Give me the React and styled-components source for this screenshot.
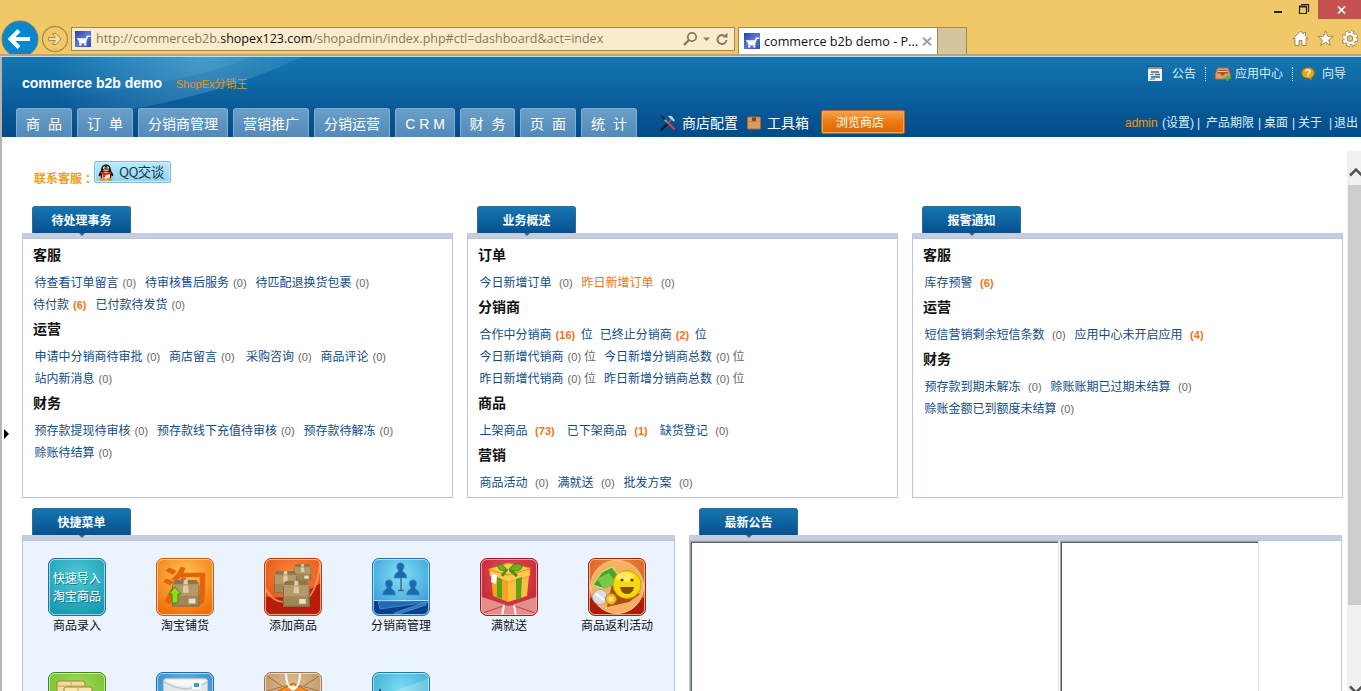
import React from "react";
import styled, { createGlobalStyle, css } from "styled-components";

const GlobalStyle = createGlobalStyle`
  * { box-sizing: border-box; }
  body {
    margin: 0;
    overflow: hidden;
    background: #fff;
    font: 12px/22px "Liberation Sans", "Noto Sans CJK SC", sans-serif;
  }
`;

const Page = styled.div`
  width: 1361px;
  height: 691px;
  display: flex;
  flex-direction: column;
  overflow: hidden;
`;

/* ---------- browser chrome ---------- */

const Chrome = styled.div`
  flex: none;
  height: 57px;
  background: #f0c868;
  border-bottom: 1px solid #c3dfe9;
  box-shadow: inset 0 -2px 0 #b3a584;
`;

const TitleBar = styled.div`
  height: 19px;
  display: flex;
  justify-content: flex-end;
`;

const CloseButton = styled.div`
  width: 43px;
  height: 19px;
  background: #c75050;
  display: flex;
  align-items: center;
  justify-content: center;
  padding-left: 3px;
`;

const WindowGlyph = styled.svg`
  display: block;
`;

const ToolBar = styled.div`
  height: 35px;
  display: flex;
  overflow: hidden;
`;

const NavGlyph = styled.svg`
  flex: none;
  display: block;
`;

const AddressBar = styled.div`
  width: 664px;
  height: 24px;
  margin: 8px 3px 0 2px;
  padding: 0 5px 0 3px;
  border: 1px solid #a08a4c;
  background: #faebcc;
  display: flex;
  align-items: center;
  color: #85795c;
  font-family: "Open Sans", "Noto Sans", sans-serif;
  font-size: 12.5px;
`;

const Url = styled.span`
  flex: 1;
  padding-left: 5px;
  white-space: nowrap;
  b { font-weight: 400; color: #111; }
`;

const BrowserTab = styled.div`
  width: 200px;
  height: 27px;
  margin-top: 8px;
  padding: 0 5px 0 5px;
  border: 1px solid #a08a4c;
  border-bottom: 0;
  background: #fff;
  display: flex;
  align-items: center;
  font-family: "Open Sans", "Noto Sans", sans-serif;
  font-size: 12.65px;
  color: #111;
  white-space: nowrap;
  span { flex: 1; padding-left: 4px; }
`;

const NewTab = styled.div`
  width: 29px;
  height: 27px;
  margin-top: 8px;
  border: 1px solid #a08a4c;
  border-width: 1px 1px 0 0;
  background: #d6c59c;
`;

const BrowserIcons = styled.div`
  margin-left: auto;
  padding-top: 11px;
  display: flex;
  gap: 8px;
`;

/* ---------- application header ---------- */

const Body = styled.div`
  flex: 1;
  min-height: 0;
  border-left: 2px solid #b4b4b4;
  display: flex;
  flex-direction: column;
`;

const Header = styled.header`
  position: relative;
  flex: none;
  height: 80px;
  background: linear-gradient(#1577b0, #0c62a0 45%, #024a88);
  display: flex;
  flex-direction: column;
  justify-content: space-between;
`;

const Glow = styled.svg`
  position: absolute;
  left: 0;
  top: 0;
`;

const HeaderTop = styled.div`
  position: relative;
  display: flex;
  align-items: flex-start;
  padding-left: 20px;
  color: #fff;
  white-space: nowrap;
`;

const SiteName = styled.span`
  width: 154px;
  padding-top: 15px;
  font-size: 14px;
  font-weight: 700;
`;

const Product = styled.span`
  padding-top: 16px;
  font-size: 11px;
  color: #e3951c;
`;

const TopLinks = styled.div`
  margin-left: auto;
  padding: 6px 15px 0 0;
  display: flex;
  align-items: center;
  color: #d8f0ff;
`;

const TopLink = styled.span`
  display: flex;
  align-items: center;
  gap: ${(p) => p.$gap}px;
  height: 22px;
`;

const Dots = styled.i`
  height: 14px;
  margin: 0 ${(p) => p.$after}px 0 9px;
  border-left: 1px dotted #cfe6f4;
`;

const NavRow = styled.nav`
  position: relative;
  display: flex;
  padding-left: 14px;
  color: #fff;
  white-space: nowrap;
`;

const NavTab = styled.span`
  width: ${(p) => p.$w}px;
  height: 29px;
  margin-right: 5px;
  padding-top: 1px;
  border: 1px solid #81add1;
  border-bottom: 0;
  border-radius: 3px 3px 0 0;
  background: linear-gradient(#6a9fc8, #5289b8);
  font-size: 14px;
  line-height: 28px;
  text-align: center;
  word-spacing: ${(p) => (p.$wide ? 4 : 0)}px;
`;

const Tool = styled.span`
  display: flex;
  align-items: center;
  gap: 6px;
  margin: 1px 9px 0 0;
  font-size: 14px;
`;

const Tools = styled.div`
  display: flex;
  padding-left: 18px;
`;

const ShopButton = styled.span`
  width: 84px;
  height: 24px;
  margin: 2px 0 0 3px;
  padding-left: 14px;
  border: 1px solid #b9632a;
  border-radius: 2px;
  background: linear-gradient(#f6a54c, #ee7d12 45%, #dd6500);
  box-shadow: inset 0 0 0 1px #f3a45a;
  line-height: 25px;
`;

const Account = styled.div`
  display: flex;
  margin-left: auto;
  padding: 3px 3px 0 0;
  line-height: 24px;
  color: #d8f0ff;
`;

const AccountPart = styled.span`
  width: ${(p) => p.$w}px;
  color: ${(p) => (p.$user ? "#eb9a12" : "inherit")};
`;

/* ---------- content ---------- */

const Content = styled.div`
  flex: 1;
  min-height: 0;
  display: flex;
`;

const Gutter = styled.div`
  width: 20px;
  flex: none;
  padding: 292px 0 0 2px;
  svg { display: block; }
`;

const Main = styled.main`
  width: 1325px;
  flex: none;
  overflow: hidden;
`;

const Contact = styled.div`
  display: flex;
  height: 69px;
  padding: 24px 0 0 12px;
`;

const ContactLabel = styled.span`
  width: 60px;
  padding-top: 7px;
  font-weight: 700;
  color: #f79c10;
  white-space: nowrap;
  i { font-style: normal; padding-left: 3px; }
`;

const QQButton = styled.span`
  width: 77px;
  height: 22px;
  display: flex;
  align-items: center;
  gap: 5px;
  padding-left: 3px;
  border: 1px solid #7dbcdc;
  border-radius: 2px;
  background: linear-gradient(#bfe9fb, #a8def8 50%, #8fd0f4);
  box-shadow: inset 0 0 0 1px #c9edfc;
  color: #12394f;
  font: 13.5px/20px "Noto Sans CJK SC", sans-serif;
  letter-spacing: -0.6px;
  white-space: nowrap;
  span { margin-top: -2px; }
`;

const Columns = styled.div`
  display: flex;
  gap: 14px;
  margin-bottom: 10px;
`;

const PanelBox = styled.section`
  width: ${(p) => p.$w}px;
  flex: none;
`;

const PanelTab = styled.h2`
  position: relative;
  width: 99px;
  height: 27px;
  margin: 0 0 0 10px;
  border: 1px solid #2c6a98;
  border-bottom: 0;
  border-radius: 3px 3px 0 0;
  background: linear-gradient(#1577b2, #07508e);
  color: #fff;
  font-size: 12px;
  line-height: 28px;
  text-align: center;
  &::after {
    content: "";
    position: absolute;
    left: 46px;
    top: 26px;
    border: 3px solid transparent;
    border-top: 3px solid #3a6283;
    border-bottom: 0;
  }
`;

const PanelBody = styled.div`
  height: ${(p) => p.$h}px;
  border: 1px solid #b9c4d8;
  border-top: 5px solid #c5cee1;
  box-shadow: inset 0 1px 0 #b9c4d8;
  background: ${(p) => (p.$tinted ? "#ebf3ff" : "#fff")};
`;

const Lists = styled.div`
  padding: 4px 0 0 10px;
`;

const GroupTitle = styled.h3`
  height: 30px;
  margin: 0;
  font-size: 14px;
  line-height: 26px;
  color: #111;
`;

const Line = styled.div`
  display: flex;
  height: 22px;
  padding-left: ${(p) => p.$indent}px;
  white-space: nowrap;
`;

const Label = styled.a`
  color: ${(p) => (p.$hot ? "#f47216" : "#0f4c86")};
`;

const Count = styled.span`
  margin: 0 ${(p) => p.$after}px 0 ${(p) => p.$before}px;
  font-size: 11px;
  line-height: 23px;
  color: #666;
  ${(p) => p.$hot && css`font-weight: 700; color: #f47216;`}
`;

const Unit = styled.span`
  margin-right: ${(p) => p.$after}px;
  color: ${(p) => (p.$linked ? "#0f4c86" : "#666")};
`;

const Shortcuts = styled.div`
  display: grid;
  grid-template-columns: repeat(6, 108px);
  grid-auto-rows: 114px;
  padding-top: 18px;
`;

const Shortcut = styled.div`
  display: flex;
  flex-direction: column;
  align-items: center;
  color: #111;
  line-height: 20px;
  white-space: nowrap;
  svg { display: block; }
`;

const Frames = styled.div`
  display: flex;
  padding-top: 1px;
  gap: 1px;
`;

const Frame = styled.div`
  width: ${(p) => p.$w}px;
  height: 160px;
  border: 1px solid #a0a0a0;
  border-right-color: #e3e3e3;
  box-shadow: inset 1px 1px 0 #606060;
`;

const ScrollBar = styled.div`
  width: 14px;
  height: 540px;
  flex: none;
  margin-top: 14px;
  padding-left: 1px;
  background: #f0f0f0;
  display: flex;
  flex-direction: column;
`;

const ScrollThumb = styled.div`
  height: 420px;
  background: #cdcdcd;
`;

const ScrollArrow = styled.svg`
  display: block;
  height: ${(p) => p.$h}px;
  width: 13px;
`;

/* ---------- drawings ---------- */

const CartIcon = () => (
  <NavGlyph width="16" height="16" viewBox="0 0 16 16">
    <defs>
      <linearGradient id="cart" x1="0" y1="0" x2="1" y2="1">
        <stop offset="0" stopColor="#2a3fa8" />
        <stop offset=".5" stopColor="#5b7ad8" />
        <stop offset="1" stopColor="#2a48b4" />
      </linearGradient>
    </defs>
    <rect width="16" height="16" fill="url(#cart)" />
    <path d="M1.5 7.2h9.200L12 4.600h3.400v1.300h-2.300l-1.400 3.300-.5 3.300H4.400L3.600 9.500z" fill="#fff" />
    <circle cx="5.3" cy="13.600" r="1.200" fill="#fff" />
    <circle cx="10.3" cy="13.600" r="1.200" fill="#fff" />
  </NavGlyph>
);

const Penguin = () => (
  <svg width="16" height="17" viewBox="0 0 16 17">
    <path d="M3 6.5C3 2.5 5 .5 8 .5s5 2 5 6c1.5 2 2.6 4 2.2 5.6-.8.6-1.6-.8-1.6-.8L13 14H3l-.6-2.7s-.8 1.4-1.6.8C.4 10.5 1.5 8.5 3 6.5z" fill="#171717" />
    <ellipse cx="8" cy="12" rx="4" ry="4" fill="#fff" />
    <path d="M3 7.6q5 2.4 10 0l.4 2q-3 1.5-6 1.4l-.2 2.400H4.600l.1-2.800-2.100-1z" fill="#e2231a" />
    <ellipse cx="6.3" cy="3.900" rx="1.200" ry="1.600" fill="#fff" />
    <ellipse cx="9.700" cy="3.900" rx="1.200" ry="1.600" fill="#fff" />
    <circle cx="6.600" cy="4.100" r=".6" /><circle cx="9.400" cy="4.100" r=".6" />
    <ellipse cx="8" cy="6.500" rx="3" ry=".9" fill="#f5a51c" />
    <ellipse cx="4.600" cy="15.200" rx="3.200" ry="1.500" fill="#f08a1a" />
    <ellipse cx="11.400" cy="15.200" rx="3.200" ry="1.500" fill="#f08a1a" />
  </svg>
);

const NoteIcon = () => (
  <svg width="16" height="16" viewBox="0 0 16 16">
    <rect x="1" y="1" width="14" height="14" fill="#f3f3f3" />
    <path d="M.5 1.500h15" stroke="#2d3740" strokeWidth="3" strokeDasharray="1 1" />
    <path d="M4 6h8" stroke="#444" strokeWidth="1.300" />
    <path d="M3 8.500h4M3 13h5" stroke="#58a4c8" strokeWidth="1.300" />
    <path d="M8 8.500h5M4 11h9" stroke="#2c6c9a" strokeWidth="1.300" />
  </svg>
);

const TrayIcon = () => (
  <svg width="16" height="15" viewBox="0 0 16 15">
    <path d="M2.500 1h10.500l2 6v5H.500V7z" fill="#e89a60" stroke="#b8703c" />
    <path d="M3.500 3h8.500l1.200 3.500H10l-1 2H6.500l-1-2H2.300z" fill="#9c5a34" />
    <path d="M3 4.500h9.500" stroke="#f3c39a" />
    <path d="M12.500 8v6M9.500 11h6" stroke="#22c832" strokeWidth="1.600" />
  </svg>
);

const HelpIcon = () => (
  <svg width="15" height="15" viewBox="0 0 15 15">
    <path d="M7 .8c3.800 0 6.300 2 6.300 5 0 2.400-1 3.800-2.800 4.600l.2 2.800-3.200-2.200C3.500 11.300.7 9.400.7 6 .7 2.800 3.200.8 7 .8z" fill="#e7a70c" stroke="#a36e05" />
    <path d="M4.800 4.500C5 2.200 9 2.200 9 4.500c0 1.500-2 1.500-2 3.200" fill="none" stroke="#fff" strokeWidth="1.500" />
    <circle cx="7" cy="9.400" r=".9" fill="#fff" />
  </svg>
);

const WrenchIcon = () => (
  <svg width="16" height="16" viewBox="0 0 16 16">
    <path d="M4.500 4.500L8 8" stroke="#b9c2cb" strokeWidth="1.200" />
    <path d="M1 1l3.500 1L5 5 2 4z" fill="#222" />
    <path d="M8 8l6 6" stroke="#d42430" strokeWidth="2.400" strokeLinecap="round" />
    <path d="M8 7.500l6.500 6.500" stroke="#f0a0a4" strokeWidth=".6" />
    <path d="M1.500 14.500L7 9" stroke="#14181f" strokeWidth="2.400" strokeLinecap="round" />
    <path d="M7 9l4-4" stroke="#6a7480" strokeWidth="1.500" />
    <path d="M8 1c3-1 5 .5 5.500 2.500l1.500 2-1.500 1L9.500 3z" fill="#c3ccd5" />
  </svg>
);

const ToolboxIcon = () => (
  <svg width="14" height="14" viewBox="0 0 14 14">
    <rect x=".5" y="1" width="13" height="12" rx="1" fill="#dc9a60" stroke="#a8683c" />
    <path d="M1 5.500h12" stroke="#c88850" />
    <path d="M5 1.500h4v4L7.800 4.700 7 5.600l-.8-.9L5 5.500z" fill="#7c4426" />
  </svg>
);

const Tile = ({ id, from, to, edge, children }) => (
  <svg width="58" height="58" viewBox="0 0 58 58">
    <defs>
      <radialGradient id={id} cx=".5" cy=".3" r=".75">
        <stop offset="0" stopColor={from} />
        <stop offset="1" stopColor={to} />
      </radialGradient>
      <clipPath id={id + "c"}><rect x="1.500" y="1.500" width="55" height="55" rx="5.500" /></clipPath>
    </defs>
    <rect x=".5" y=".5" width="57" height="57" rx="6.500" fill={`url(#${id})`} stroke={edge} />
    <g clipPath={`url(#${id}c)`}>{children}</g>
    <rect x="1.500" y="1.500" width="55" height="55" rx="5.500" fill="none" stroke="#fff" strokeOpacity=".55" />
  </svg>
);

const Carton = ({ x, y, s = 1 }) => (
  <g transform={`translate(${x} ${y}) scale(${s})`}>
    <path d="M3 0h22l3 5H0z" fill="#8f7648" />
    <path d="M0 5h28v22H0z" fill="#b59a68" />
    <path d="M0 16h28v11H0z" fill="#94794c" opacity=".6" />
    <path d="M12 0h4l1 13h-6z" fill="#dccdad" />
    <path d="M.5 5h27v21.500H.5z" fill="none" stroke="#7a6038" strokeWidth=".8" />
    <path d="M0 5h28" stroke="#d2bb8c" strokeWidth=".8" />
    <rect x="17" y="19" width="7" height="5" fill="#e8dfca" />
  </g>
);

const ImportTile = () => (
  <Tile id="t1" from="#4fc8d6" to="#159aae" edge="#1d6da6">
    <g fill="#0e7486" fontFamily="Noto Sans CJK SC" fontSize="12">
      <text x="6" y="25.500">快速导入</text>
      <text x="6" y="43.500">淘宝商品</text>
    </g>
    <g fill="#fff" fontFamily="Noto Sans CJK SC" fontSize="12">
      <text x="5" y="24.500">快速导入</text>
      <text x="5" y="42.500">淘宝商品</text>
    </g>
  </Tile>
);

const TaoTile = () => (
  <Tile id="t2" from="#fcc850" to="#ee6c0c" edge="#cf5a0a">
    <text x="6" y="43" fontFamily="Noto Sans CJK SC" fontWeight="700" fontSize="40" textLength="46" lengthAdjust="spacingAndGlyphs" fill="#e86008">淘</text>
    <Carton x="16" y="22" s=".98" />
    <path d="M19 29l6 7h-3v9h-6v-9h-3z" fill="#8edb1c" stroke="#3d8c0a" />
  </Tile>
);

const CartonsTile = () => (
  <Tile id="t3" from="#ff8a3c" to="#e0480e" edge="#c23a0c">
    <path d="M0 38q30 6 58-14v34H0z" fill="#b81c0a" />
    <path d="M0 28Q8 44 20 44M44 40Q54 30 56 4" stroke="#ffa878" strokeWidth="2" fill="none" opacity=".7" />
    <Carton x="30" y="6" s=".61" />
    <Carton x="10" y="13" s=".82" />
    <Carton x="19" y="23" s=".95" />
  </Tile>
);

const Person = ({ x, y }) => (
  <path transform={`translate(${x} ${y})`} d="M0 15.500q0-4 3.500-6Q5 8.500 4.200 7.500C1.800 5 2.800.3 6.500.3s4.700 4.700 2.300 7.200q-.8 1 .7 2 3.500 2 3.500 6z" fill="#1f68ae" stroke="#3f94cc" strokeWidth=".8" />
);

const TeamTile = () => (
  <Tile id="t4" from="#82e0f4" to="#2b96d6" edge="#1f73b8">
    <rect y="42" width="58" height="16" fill="#0a3f8e" />
    <path d="M0 42.500h58" stroke="#a8e4fa" />
    <path d="M6 43l50 1-48 7z" fill="#2468b4" stroke="#5a9ad8" strokeWidth=".7" />
    <path d="M22 55l32-11v3L24 57z" fill="#2f78bf" stroke="#5a9ad8" strokeWidth=".7" />
    <path d="M29 20v12M26 32.500h6" stroke="#48687c" strokeWidth="1.500" />
    <Person x="22" y="4.500" /><Person x="10.500" y="21.500" /><Person x="34.500" y="21.500" />
  </Tile>
);

const GiftTile = () => (
  <Tile id="t5" from="#e85058" to="#bc1f2e" edge="#a81824">
    <path d="M0 38l29 10 29-10v20H0z" fill="#e58f8c" />
    <path d="M0 38l29 9 29-9M0 56l26-9M58 56l-26-9" stroke="#b93f40" fill="none" />
    <path d="M24 47l-2 11M34 47l2 11" stroke="#fff" strokeWidth="2" />
    <path d="M11 17l17 5v22l-15-6z" fill="#f4a51f" />
    <path d="M28 22l21-5-2 21-19 6z" fill="#fdbf3e" />
    <path d="M9 11l19-6 22 5v8l-21 6-19-6z" fill="#ffc850" stroke="#d98c16" strokeWidth=".7" />
    <path d="M10 12l18 5 22-6" stroke="#d98c16" fill="none" />
    <path d="M17 19l5 2v20l-5-2zM36 21l6-2-1 21-5 1.500z" fill="#5da01b" />
    <path d="M27 12c-6-9-12-6-8-1 2 2 5 2 8 1zm2 0c4-9 16-7 12-1-3 3-8 2-12 1z" fill="#6cb01f" stroke="#32700d" strokeWidth=".7" />
    <path d="M27 11l-5 7M30 12l7 6" stroke="#4c9014" strokeWidth="3" />
    <path d="M12 16l5 1-1 9-5-2z" fill="#fff" />
  </Tile>
);

const SmileTile = () => (
  <Tile id="t6" from="#f8a050" to="#d14c10" edge="#9c2a0a">
    <path d="M0 40h58v18H0z" fill="#ac1c08" />
    <circle cx="29" cy="29" r="26.500" fill="#f7b060" stroke="#fbd09a" />
    <path d="M24 26l28 10-11 8-22 5z" fill="#b04b12" />
    <path d="M14 14l10-5 11 15-21 6-9-3z" fill="#49a427" stroke="#c8ec9c" />
    <path d="M9 21l12-6 8 11-13 5z" fill="#79c948" />
    <circle cx="39" cy="26.500" r="14" fill="#f6d90c" stroke="#cfa405" />
    <ellipse cx="37" cy="19" rx="9" ry="5" fill="#fff59c" opacity=".6" />
    <circle cx="34" cy="22" r="1.600" fill="#6b4700" /><circle cx="44" cy="22" r="1.600" fill="#6b4700" />
    <path d="M32 29h14q-1 7-7 7t-7-7z" fill="#8a4b06" />
    <circle cx="12" cy="39" r="7.500" fill="#dcdde2" stroke="#a7a9b0" />
    <path d="M8 36l8 6" stroke="#fff" strokeWidth="2" />
    <circle cx="23" cy="41" r="5.500" fill="#efc022" stroke="#b0820c" />
    <circle cx="23" cy="41" r="2.500" fill="#f9e27a" />
  </Tile>
);

const TicketTile = () => (
  <Tile id="t7" from="#a4dc58" to="#6bb82a" edge="#3a8a1c">
    <rect x="9" y="9" width="28" height="20" rx="2" fill="#f0dc9c" stroke="#a08234" />
    <path d="M9 14h28M23 9v10" stroke="#c4a658" />
    <rect x="16" y="15" width="28" height="20" rx="2" fill="#f6e5ac" stroke="#a08234" />
    <path d="M30 15v20" stroke="#c4a658" />
  </Tile>
);

const MailTile = () => (
  <Tile id="t8" from="#62b8e8" to="#2c88c8" edge="#1c6cac">
    <rect x="7.500" y="6.500" width="44" height="34" rx="3" fill="#e2e6e9" stroke="#bcc4ca" />
    <path d="M8 10q22 14 44 0" fill="none" stroke="#b6bec4" />
    <path d="M8.500 8q21.500 13 43 0z" fill="#f6f8f9" />
    <rect x="36" y="9" width="9" height="8" fill="#fff" />
    <rect x="38" y="11" width="5" height="4" fill="#3c9cd4" />
  </Tile>
);

const TagTile = () => (
  <Tile id="t9" from="#dfbf95" to="#b98d5c" edge="#a07a52">
    <path d="M0 2l18 12M58 2L40 14M0 20l20-6h18l20 6" stroke="#9a7448" fill="none" />
    <path d="M12 20l17-9 17 9v20H12z" fill="#f28a26" stroke="#c0600c" />
    <circle cx="29" cy="16" r="2.500" fill="#fff" />
    <path d="M22 0q0 14 6 17M36 0q0 14-6 17" stroke="#fff" strokeWidth="2" fill="none" />
  </Tile>
);

const BlueTile = () => (
  <Tile id="t10" from="#7cdcf2" to="#2ea4cc" edge="#1b78ae">
    <path d="M20 20L58 6v52H20z" fill="#fff" opacity=".2" />
    <path d="M8 17v8" stroke="#175b80" strokeWidth="2" />
  </Tile>
);

/* ---------- data ---------- */

const navTabs = [
  ["商 品", 56], ["订 单", 56], ["分销商管理", 90], ["营销推广", 76], ["分销运营", 76],
  ["C R M", 60], ["财 务", 55], ["页 面", 56], ["统 计", 56],
];

// An entry: label, count, and optionally the space before and after the count.
const todo = [
  { title: "客服", lines: [
    { items: [["待查看订单留言", 0], ["待审核售后服务", 0], ["待匹配退换货包裹", 0]] },
    { indent: 0, items: [["待付款", 6], ["已付款待发货", 0]] },
  ] },
  { title: "运营", lines: [
    { items: [["申请中分销商待审批", 0], ["商店留言", 0, 4, 11.5], ["采购咨询", 0], ["商品评论", 0]] },
    { items: [["站内新消息", 0]] },
  ] },
  { title: "财务", lines: [
    { items: [["预存款提现待审核", 0], ["预存款线下充值待审核", 0], ["预存款待解冻", 0]] },
    { items: [["赊账待结算", 0]] },
  ] },
];

const overview = [
  { title: "订单", lines: [
    { items: [["今日新增订单", 0, 7.5], ["昨日新增订单", 0, 7.5, 9, { hot: true }]] },
  ] },
  { title: "分销商", lines: [
    { items: [["合作中分销商", 16, 4, 5.5, { unit: 7, linked: true }], ["已终止分销商", 2, 4, 5.5, { unit: 7, linked: true }]] },
    { items: [["今日新增代销商", 0, 4, 3, { unit: 8 }], ["今日新增分销商总数", 0, 4, 3, { unit: 8 }]] },
    { items: [["昨日新增代销商", 0, 4, 3, { unit: 8 }], ["昨日新增分销商总数", 0, 4, 3, { unit: 8 }]] },
  ] },
  { title: "商品", lines: [
    { items: [["上架商品", 73, 7.5, 12], ["已下架商品", 1, 7.5, 12], ["缺货登记", 0, 7.5]] },
  ] },
  { title: "营销", lines: [
    { items: [["商品活动", 0, 7.5], ["满就送", 0, 7.5], ["批发方案", 0, 7.5]] },
  ] },
];

const alerts = [
  { title: "客服", lines: [{ items: [["库存预警", 6, 7.5]] }] },
  { title: "运营", lines: [
    { items: [["短信营销剩余短信条数", 0, 7.5], ["应用中心未开启应用", 4, 7.5]] },
  ] },
  { title: "财务", lines: [
    { items: [["预存款到期未解冻", 0, 7.5], ["赊账账期已过期未结算", 0, 7.5]] },
    { items: [["赊账金额已到额度未结算", 0]] },
  ] },
];

const shortcuts = [
  ["商品录入", ImportTile], ["淘宝铺货", TaoTile], ["添加商品", CartonsTile],
  ["分销商管理", TeamTile], ["满就送", GiftTile], ["商品返利活动", SmileTile],
  ["", TicketTile], ["", MailTile], ["", TagTile], ["", BlueTile],
];

const Entry = ({ item }) => {
  const [label, count, before = 4, after = 9, opts = {}] = item;
  return (
    <>
      <Label $hot={opts.hot}>{label}</Label>
      <Count $hot={count > 0} $before={before} $after={after}>({count})</Count>
      {opts.unit && <Unit $after={opts.unit} $linked={opts.linked}>位</Unit>}
    </>
  );
};

const Panel = ({ title, width, height, tinted, children }) => (
  <PanelBox $w={width}>
    <PanelTab>{title}</PanelTab>
    <PanelBody $h={height} $tinted={tinted}>{children}</PanelBody>
  </PanelBox>
);

const ListPanel = ({ title, groups }) => (
  <Panel title={title} width={431} height={265}>
    <Lists>
      {groups.map((g) => (
        <React.Fragment key={g.title}>
          <GroupTitle>{g.title}</GroupTitle>
          {g.lines.map((line, i) => (
            <Line key={i} $indent={line.indent ?? 1.6}>
              {line.items.map((item) => <Entry key={item[0]} item={item} />)}
            </Line>
          ))}
        </React.Fragment>
      ))}
    </Lists>
  </Panel>
);

export default function App() {
  return (
    <Page>
      <GlobalStyle />
      <Chrome>
        <TitleBar>
          <WindowGlyph width="60" height="19">
            <path d="M16 12h8" stroke="#222" strokeWidth="2" />
            <path d="M41.500 6.500h7v7h-7zM43 4.500h7.500v7.500" fill="none" stroke="#222" strokeWidth="1.200" />
            <path d="M41 6.500h8" stroke="#222" strokeWidth="2" />
          </WindowGlyph>
          <CloseButton>
            <svg width="9" height="8" viewBox="0 0 9 8"><path d="M1 .5l7 7M8 .5l-7 7" stroke="#fff" strokeWidth="1.700" /></svg>
          </CloseButton>
        </TitleBar>
        <ToolBar>
          <NavGlyph width="41" height="35">
            <circle cx="20" cy="20" r="18" fill="#0a86cc" stroke="#6c7f70" />
            <path d="M30 20H11.500M19 11.500L10.500 20l8.500 8.500" fill="none" stroke="#fff" strokeWidth="4" />
          </NavGlyph>
          <NavGlyph width="28" height="35">
            <circle cx="14" cy="20" r="12.500" fill="none" stroke="#a98b45" strokeWidth="1.300" />
            <path d="M7.500 18.500h7l-3-4h3.500l5 5.500-5 5.500h-3.500l3-4h-7z" fill="#f8e3b0" stroke="#a98b45" />
          </NavGlyph>
          <AddressBar>
            <CartIcon />
            <Url>http://commerceb2b.<b>shopex123.com</b>/shopadmin/index.php#ctl=dashboard&amp;act=index</Url>
            <NavGlyph width="46" height="16" viewBox="0 0 46 16" fill="none" stroke="#85795c">
              <circle cx="9" cy="6" r="4.200" strokeWidth="1.800" />
              <path d="M6 9l-5 5" strokeWidth="2.400" />
              <path d="M20 6.500h7L23.500 10z" fill="#85795c" stroke="none" />
              <path d="M43.500 9a4.500 4.500 0 1 1-2-4.200" strokeWidth="1.900" />
              <path d="M39.500 6.500h5v-5z" fill="#85795c" stroke="none" />
            </NavGlyph>
          </AddressBar>
          <BrowserTab>
            <CartIcon />
            <span>commerce b2b demo - P...</span>
            <svg width="10" height="9" viewBox="0 0 10 9"><path d="M1 .8l8 7.400M9 .8L1 8.200" stroke="#a0a0a0" strokeWidth="2" /></svg>
          </BrowserTab>
          <NewTab />
          <BrowserIcons>
            <svg width="17" height="17" viewBox="0 0 17 17"><path d="M8.500 1L1 8.500h2V15.500h4v-5h3v5h4v-7h2L13.500 6V2.500h-2V4z" fill="#fff" stroke="#9a8a5a" /></svg>
            <svg width="17" height="17" viewBox="0 0 17 17"><path d="M8.500.8l2 5.400 5.700.2-4.500 3.500 1.600 5.500-4.800-3.200-4.800 3.200 1.600-5.500L.8 6.400l5.700-.2z" fill="#fff" stroke="#9a8a5a" /></svg>
            <svg width="19" height="17" viewBox="0 0 19 17">
              <circle cx="8" cy="8.500" r="6.500" fill="none" stroke="#9a8a5a" strokeWidth="4" strokeDasharray="3 2.105" />
              <circle cx="8" cy="8.500" r="4.500" fill="none" stroke="#9a8a5a" strokeWidth="4.400" />
              <circle cx="8" cy="8.500" r="6.300" fill="none" stroke="#fff" strokeWidth="2.400" strokeDasharray="2.400 2.548" />
              <circle cx="8" cy="8.500" r="4.500" fill="none" stroke="#fff" strokeWidth="2.400" />
            </svg>
          </BrowserIcons>
        </ToolBar>
      </Chrome>
      <Body>
        <Header>
          <Glow width="420" height="80">
            <defs>
              <radialGradient id="glow" cx="200" cy="0" r="150" gradientUnits="userSpaceOnUse">
                <stop offset="0" stopColor="#8fd0ee" stopOpacity=".32" />
                <stop offset="1" stopColor="#8fd0ee" stopOpacity="0" />
              </radialGradient>
            </defs>
            <path d="M0 0h300Q225 36 120 54L0 80z" fill="url(#glow)" />
            <path d="M60 0h190Q190 24 70 40z" fill="url(#glow)" opacity=".4" />
          </Glow>
          <HeaderTop>
            <SiteName>commerce b2b demo</SiteName>
            <Product>ShopEx分销王</Product>
            <TopLinks>
              <TopLink $gap={9}><NoteIcon />公告</TopLink>
              <Dots $after={9} />
              <TopLink $gap={4}><TrayIcon />应用中心</TopLink>
              <Dots $after={8} />
              <TopLink $gap={6}><HelpIcon />向导</TopLink>
            </TopLinks>
          </HeaderTop>
          <NavRow>
            {navTabs.map(([label, w]) => (
              <NavTab key={label} $w={w} $wide={label !== "C R M"}>{label}</NavTab>
            ))}
            <Tools>
              <Tool><WrenchIcon />商店配置</Tool>
              <Tool><ToolboxIcon />工具箱</Tool>
              <ShopButton>浏览商店</ShopButton>
            </Tools>
            <Account>
              <AccountPart $w={37} $user>admin</AccountPart>
              <AccountPart $w={35}>(设置)</AccountPart>
              <AccountPart $w={9}>|</AccountPart>
              <AccountPart $w={52}>产品期限</AccountPart>
              <AccountPart $w={6}>|</AccountPart>
              <AccountPart $w={28}>桌面</AccountPart>
              <AccountPart $w={6}>|</AccountPart>
              <AccountPart $w={31}>关于</AccountPart>
              <AccountPart $w={5}>|</AccountPart>
              <AccountPart $w={24}>退出</AccountPart>
            </Account>
          </NavRow>
        </Header>
        <Content>
          <Gutter>
            <svg width="6" height="10"><path d="M0 0l5 5-5 5z" fill="#000" /></svg>
          </Gutter>
          <Main>
            <Contact>
              <ContactLabel>联系客服<i>：</i></ContactLabel>
              <QQButton><Penguin /><span>QQ交谈</span></QQButton>
            </Contact>
            <Columns>
              <ListPanel title="待处理事务" groups={todo} />
              <ListPanel title="业务概述" groups={overview} />
              <ListPanel title="报警通知" groups={alerts} />
            </Columns>
            <Columns>
              <Panel title="快捷菜单" width={653} height={170} tinted>
                <Shortcuts>
                  {shortcuts.map(([label, Icon], i) => (
                    <Shortcut key={i}><Icon />{label}</Shortcut>
                  ))}
                </Shortcuts>
              </Panel>
              <Panel title="最新公告" width={653} height={170}>
                <Frames>
                  <Frame $w={369} />
                  <Frame $w={199} />
                </Frames>
              </Panel>
            </Columns>
          </Main>
          <ScrollBar>
            <ScrollArrow $h={34}><path d="M2 24.500l6-6 6 6" fill="none" stroke="#555" strokeWidth="2.600" /></ScrollArrow>
            <ScrollThumb />
            <ScrollArrow $h={86}><path d="M2 81.500l6 6 6-6" fill="none" stroke="#555" strokeWidth="2.600" /></ScrollArrow>
          </ScrollBar>
        </Content>
      </Body>
    </Page>
  );
}
